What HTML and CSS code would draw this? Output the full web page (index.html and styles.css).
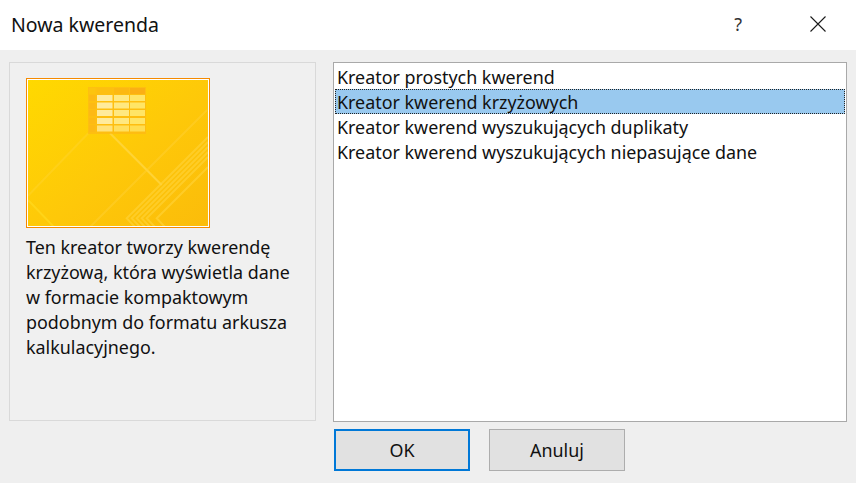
FILE: index.html
```html
<!DOCTYPE html>
<html lang="pl">
<head>
<meta charset="utf-8">
<title>Nowa kwerenda</title>
<link rel="stylesheet" href="styles.css">
</head>
<body>
<div class="dialog">
  <header class="titlebar">
    <h1 class="title">Nowa kwerenda</h1>
    <span class="help">?</span>
    <svg class="close" width="16" height="16" viewBox="0 0 16 16" aria-hidden="true"><path d="M.5.5l15 15M15.500.5l-15 15" stroke="#1a1a1a" stroke-width="1.100" fill="none"/></svg>
  </header>
  <main class="content">
    <section class="panel">
      <div class="picture">
        <svg class="art" width="180" height="146" viewBox="2 2 180 146" aria-hidden="true">
          <defs>
            <linearGradient id="bg" x1="0" y1="0" x2="1" y2="1">
              <stop offset="0" stop-color="#ffd900"/>
              <stop offset="0.55" stop-color="#fec809"/>
              <stop offset="1" stop-color="#fbbc0a"/>
            </linearGradient>
          </defs>
          <rect x="2" y="2" width="180" height="146" fill="url(#bg)"/>
          <g fill="none" stroke-width="2">
            <path d="M62.300 55.300L2 117.700" stroke="#ffd32a" stroke-opacity=".5"/>
            <path d="M84 55.300L135.700 107" stroke="#ffd84a" stroke-opacity=".7"/>
            <path d="M181 32L64 149" stroke="#ffd032" stroke-opacity=".5"/>
            <path d="M2 122L28 149" stroke="#ffd820" stroke-opacity=".7"/>
            <g stroke="#ffd238" stroke-opacity=".65">
              <path d="M182 59L100.700 140.300 109 149"/>
              <path d="M182 64L105.700 140.300 114 149"/>
              <path d="M182 69L110.700 140.300 119 149"/>
              <path d="M182 74L115.700 140.300 124 149"/>
              <path d="M182 79L120.700 140.300 129 149"/>
              <path d="M182 89L130.700 140.300 139 149"/>
            </g>
          </g>
          <g class="grid-art">
            <rect x="62" y="9" width="58" height="47" fill="#fdb417" fill-opacity=".6"/>
            <rect x="63" y="10" width="6.500" height="6" fill="#fdc40f"/>
            <rect x="71" y="10" width="15" height="6" fill="#fdbf10"/>
            <rect x="88" y="10" width="15" height="6" fill="#fcb812"/>
            <rect x="104" y="10" width="15" height="6" fill="#fbaf14"/>
            <g fill="#fdb915">
              <rect x="63" y="17" width="6.500" height="6"/>
              <rect x="63" y="25" width="6.500" height="6"/>
              <rect x="63" y="32" width="6.500" height="6"/>
              <rect x="63" y="40" width="6.500" height="6"/>
              <rect x="63" y="47" width="6.500" height="7"/>
            </g>
            <g fill="#ffeb9c">
              <rect x="71" y="17" width="15.500" height="6"/>
              <rect x="71" y="24.500" width="15.500" height="6"/>
              <rect x="71" y="32" width="15.500" height="6"/>
              <rect x="71" y="40" width="15.500" height="6"/>
              <rect x="71" y="47.500" width="15.500" height="6" fill="#ffe27a"/>
            </g>
            <g fill="#ffe880">
              <rect x="88" y="17" width="15" height="6"/>
              <rect x="88" y="24.500" width="15" height="6"/>
              <rect x="88" y="32" width="15" height="6"/>
              <rect x="88" y="40" width="15" height="6"/>
              <rect x="88" y="47.500" width="15" height="6" fill="#ffdf5e"/>
            </g>
            <g fill="#ffe566">
              <rect x="104" y="17" width="15" height="6"/>
              <rect x="104" y="24.500" width="15" height="6"/>
              <rect x="104" y="32" width="15" height="6"/>
              <rect x="104" y="40" width="15" height="6"/>
              <rect x="104" y="47.500" width="15" height="6" fill="#ffdd50"/>
            </g>
          </g>
        </svg>
      </div>
      <p class="description">Ten kreator tworzy kwerendę krzyżową, która wyświetla dane w formacie kompaktowym podobnym do formatu arkusza kalkulacyjnego.</p>
    </section>
    <div class="side">
      <ul class="list">
        <li class="item">Kreator prostych kwerend</li>
        <li class="item selected">Kreator kwerend krzyżowych</li>
        <li class="item">Kreator kwerend wyszukujących duplikaty</li>
        <li class="item">Kreator kwerend wyszukujących niepasujące dane</li>
      </ul>
      <div class="actions">
        <button class="btn primary">OK</button>
        <button class="btn">Anuluj</button>
      </div>
    </div>
  </main>
</div>
</body>
</html>
```
FILE: styles.css
```css
* { box-sizing: border-box; }
html, body { margin: 0; padding: 0; }
body {
  width: 856px;
  height: 483px;
  overflow: hidden;
  background: #efefef;
  color: #111;
  font-family: "Noto Sans", sans-serif;
  font-size: 17.900px;
}
.dialog { display: flex; flex-direction: column; height: 483px; }
.titlebar {
  display: flex;
  align-items: center;
  height: 50px;
  padding: 0 30px 2px 11px;
  background: #fff;
}
.title { flex: 1; margin: 0; font-size: 19.500px; font-weight: 400; color: #111; }
.help { margin-right: 68px; font-size: 18px; color: #333; }
.close { display: block; }
.content {
  display: flex;
  gap: 17px;
  padding: 12px 9px 0;
}
.panel {
  width: 307px;
  height: 359px;
  padding: 15px 16px 0;
  border: 1px solid #d9d9d9;
  background: #f0f0f0;
}
.picture {
  width: 184px;
  height: 150px;
  border: 1px solid #f58a00;
  box-shadow: inset 0 0 0 1px #fff;
  padding: 1px;
}
.art { display: block; }
.description { margin: 7px 0 0; line-height: 25px; width: 270px; }
.side { width: 514px; }
.list {
  height: 360px;
  margin: 0;
  padding: 1px 1px 0;
  list-style: none;
  background: #fff;
  border: 1px solid #a9a9a9;
}
.item { height: 25px; padding-left: 2px; line-height: 27px; white-space: nowrap; }
.selected { background: #99c9ef; outline: 1px dotted #222; outline-offset: -1px; }
.actions {
  display: flex;
  gap: 19px;
  margin-top: 7px;
  padding-left: 1px;
}
.btn {
  width: 136px;
  height: 42px;
  padding: 0;
  border: 1px solid #adadad;
  background: #e1e1e1;
  color: #111;
  font: inherit;
}
.primary { border: 2px solid #0078d7; }
```
